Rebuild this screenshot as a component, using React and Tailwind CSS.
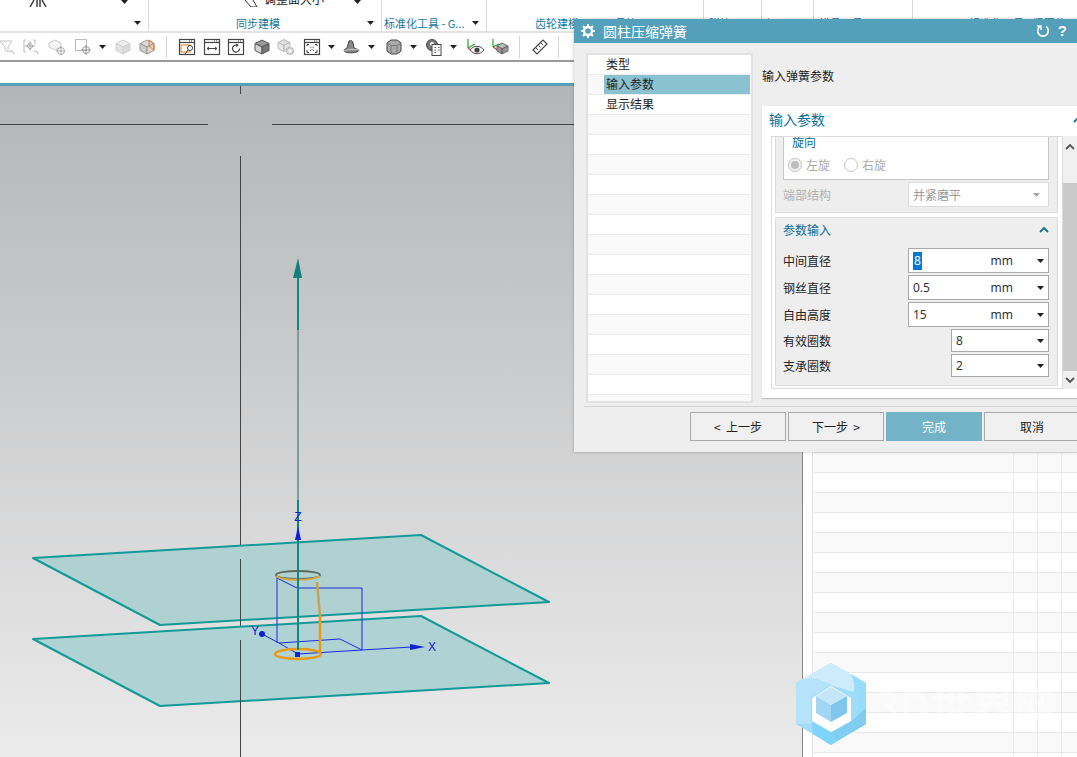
const FONT = "font-['Noto_Sans_CJK_SC','Noto_Sans',sans-serif]";

function Caret({ className = '', color = '#222' }) {
  return (
    <svg width="7" height="4" viewBox="0 0 7 4" className={`shrink-0 ${className}`}>
      <path d="M0 0H7L3.5 4Z" fill={color} />
    </svg>
  );
}

function Chevron({ className = '', color = '#0b6f93' }) {
  return (
    <svg width="10" height="7" viewBox="0 0 10 7" className={`shrink-0 ${className}`}>
      <path d="M1 6L5 2L9 6" fill="none" stroke={color} strokeWidth="1.8" />
    </svg>
  );
}

function Tool({ className = '', children }) {
  return (
    <svg width="18" height="18" viewBox="0 0 18 18" fill="none" className={`shrink-0 ${className}`}>
      {children}
    </svg>
  );
}

function WindowIcon({ className = '', children }) {
  return (
    <Tool className={className}>
      <rect x="1.5" y="1.5" width="15" height="15" stroke="#444" strokeWidth="1.2" fill="#fff" />
      <path d="M2 4.5H16" stroke="#444" strokeWidth="1.2" />
      <path d="M11 3H15" stroke="#444" strokeDasharray="1 1" />
      {children}
    </Tool>
  );
}

function CubeIcon({ className = '', top = '#bbb', left = '#888', right = '#666', stroke = '#444' }) {
  return (
    <Tool className={className}>
      <path d="M9 2L16 5.5L9 9L2 5.5Z" fill={top} stroke={stroke} />
      <path d="M2 5.5V12.5L9 16V9Z" fill={left} stroke={stroke} />
      <path d="M16 5.5V12.5L9 16V9Z" fill={right} stroke={stroke} />
    </Tool>
  );
}

function Sep({ className = '' }) {
  return <div className={`w-px h-[22px] bg-[#d4d4d4] shrink-0 ${className}`} />;
}

function Toolbar() {
  return (
    <div className="h-[29px] flex items-center overflow-hidden bg-white border-b-2 border-[#9a9a9a] shrink-0">
      <Tool className="-ml-[2px]">
        <path d="M2 3H14L10 9V14L7 12V9Z" stroke="#c4c4c4" />
        <path d="M11 14C13 12 16 13 16 16" stroke="#aaa" />
      </Tool>
      <Tool className="ml-[6px]">
        <path d="M4 2H2V14H4M11 2H13V6" stroke="#bbb" />
        <circle cx="8" cy="8" r="2.5" stroke="#aaa" />
        <path d="M8 3V13M3 8H13M12 14C13 12 16 13 16 16" stroke="#aaa" />
      </Tool>
      <Tool className="ml-[8px]">
        <path d="M7 2L13 5V9L7 12L1 9V5Z" stroke="#c8c8c8" fill="#f5f5f5" />
        <circle cx="13" cy="13" r="3.5" stroke="#aaa" />
        <path d="M13 8V17M8 13H17" stroke="#aaa" />
      </Tool>
      <Tool className="ml-[8px]">
        <rect x="1.5" y="1.5" width="11" height="11" stroke="#bbb" />
        <circle cx="12" cy="12" r="3.5" stroke="#999" />
        <path d="M12 7V17M7 12H17" stroke="#999" />
      </Tool>
      <Caret className="ml-[7px] mr-[1px]" />
      <CubeIcon className="ml-[7px]" top="#eee" left="#e3e3e3" right="#dcdcdc" stroke="#d0d0d0" />
      <Tool className="ml-[6px]">
        <path d="M9 2L16 5.5L9 9L2 5.5Z" fill="#ddd" stroke="#999" />
        <path d="M2 5.5V12.5L9 16V9Z" fill="#ccc" stroke="#999" />
        <path d="M16 5.5V12.5L9 16V9Z" fill="#e4d3c6" stroke="#999" />
        <path d="M11 2L16 5.5V12L11 8Z" stroke="#e87a1e" />
      </Tool>
      <Sep className="ml-[10px]" />
      <WindowIcon className="ml-[11px]">
        <rect x="3" y="7" width="9" height="7" stroke="#e87a1e" />
        <circle cx="12" cy="10" r="2.5" stroke="#444" fill="#fff" />
        <path d="M10 12L7 16" stroke="#444" />
      </WindowIcon>
      <WindowIcon className="ml-[7px]">
        <path d="M4 10.5H14M4 10.5L6 9M4 10.5L6 12M14 10.5L12 9M14 10.5L12 12" stroke="#444" />
      </WindowIcon>
      <WindowIcon className="ml-[6px]">
        <path d="M12.5 10.5A3.5 3.5 0 1 1 10 7.2" stroke="#444" strokeWidth="1.2" />
        <path d="M9 5.5L12 7L9.5 9Z" fill="#444" />
      </WindowIcon>
      <CubeIcon className="ml-[8px]" top="#9a9a9a" left="#d4d4d4" right="#777" stroke="#555" />
      <Tool className="ml-[6px]">
        <path d="M7 1.5L13 4.5L7 7.5L1 4.5Z" fill="#ddd" stroke="#bbb" />
        <path d="M1 4.5V10.5L7 13.5V7.5ZM13 4.5V8L7 13.5V7.5Z" fill="#e8e8e8" stroke="#bbb" />
        <circle cx="13" cy="13" r="3.5" fill="#ddd" stroke="#aaa" strokeWidth="1.4" strokeDasharray="1.5 .8" />
        <circle cx="13" cy="13" r="1.2" fill="#fff" />
      </Tool>
      <WindowIcon className="ml-[8px]">
        <path d="M4 8V6.5H6M14 8V6.5H12M4 12V14.5H6M14 12V14.5H12" stroke="#444" />
        <path d="M7 8.5L8.5 10M11 8.5L9.5 10M7 13L8.5 11.5M11 13L9.5 11.5" stroke="#777" />
      </WindowIcon>
      <Caret className="ml-[7px] mr-[1px]" />
      <Tool className="ml-[7px]">
        <path d="M6 3C8 2 10 3 10 5L11 10L16 12C16 15 3 16 1 13C1 11 4 10 4 10Z" fill="#888" stroke="#444" />
        <path d="M1 13C5 11 12 11 16 12" stroke="#ccc" />
      </Tool>
      <Caret className="ml-[7px] mr-[1px]" />
      <Tool className="ml-[9px]">
        <path d="M2 5L6 2H12L16 5V13L12 16H6L2 13Z" fill="#aaa" stroke="#444" />
        <path d="M2 5L6 7.5H12L16 5M6 7.5V16M12 7.5V16" stroke="#777" />
      </Tool>
      <Caret className="ml-[7px] mr-[1px]" />
      <Tool className="ml-[7px]">
        <circle cx="7" cy="7" r="5.5" fill="#777" stroke="#444" />
        <circle cx="7" cy="6" r="2" fill="#fff" />
        <rect x="7" y="6.5" width="9" height="11" fill="#fff" stroke="#444" />
        <path d="M9.5 9.5H11M13 9.5H14.5M9.5 12H11M13 12H14.5M9.5 14.5H11" stroke="#555" />
      </Tool>
      <Caret className="ml-[7px] mr-[1px]" />
      <Tool className="ml-[8px]">
        <path d="M2 1V10" stroke="#2aa02a" strokeWidth="1.2" />
        <path d="M2 10L9 6" stroke="#2aa02a" strokeWidth="1.2" />
        <path d="M2 10L7 14" stroke="#e03030" strokeWidth="1.2" />
        <path d="M4 12C8 7 14 7 18 12C14 17 8 17 4 12Z" fill="#fff" stroke="#444" />
        <circle cx="11" cy="12" r="2.6" fill="#444" />
      </Tool>
      <Tool className="ml-[7px]">
        <path d="M2 1V9M2 9L8 6" stroke="#2aa02a" strokeWidth="1.2" />
        <path d="M2 9L8 13" stroke="#e03030" strokeWidth="1.2" />
        <path d="M11 5L17 8L11 11L6 8Z" fill="#bbb" stroke="#666" />
        <path d="M6 8V13L11 16V11ZM17 8V13L11 16V11Z" fill="#999" stroke="#666" />
      </Tool>
      <Sep className="ml-[10px]" />
      <Tool className="ml-[11px]">
        <path d="M2 12L12 2L16 6L6 16Z" stroke="#444" strokeWidth="1.2" fill="#fff" />
        <path d="M5 10L7 12M7.5 7.5L9.5 9.5M10 5L12 7" stroke="#444" />
      </Tool>
      <Sep className="ml-[9px]" />
    </div>
  );
}

function RibbonGroup({ label, className = '', labelClass = '', caret = false, topCaret = false, children }) {
  return (
    <div className={`relative h-full border-r border-[#d8d8d8] shrink-0 overflow-hidden ${className}`}>
      {children}
      {topCaret && <Caret className="absolute right-[20px] top-[0px]" />}
      <div className={`absolute top-[15px] text-[11px] leading-[16px] text-[#1378a0] whitespace-nowrap ${labelClass}`}>{label}</div>
      {caret && <Caret className="absolute right-[7px] top-[21px]" />}
    </div>
  );
}

function Ribbon() {
  return (
    <div className="h-[33px] flex border-b-2 border-[#e3e3e3] bg-white shrink-0">
      <RibbonGroup className="w-[149px]" caret topCaret>
        <svg width="18" height="7" viewBox="0 0 18 7" className="absolute left-[29px] top-0" fill="none">
          <path d="M1 7L5 0M8 0V7M11 0V7M17 7L13 0" stroke="#333" strokeWidth="1.4" />
        </svg>
      </RibbonGroup>
      <RibbonGroup className="w-[233px]" label="同步建模" labelClass="left-[87px]" caret topCaret>
        <svg width="16" height="7" viewBox="0 0 16 7" className="absolute left-[94px] top-0" fill="none">
          <path d="M2 0L8 7H14L10 0" stroke="#333" />
        </svg>
        <div className="absolute left-[115px] -top-[9px] text-[12px] leading-[16px] text-[#222] whitespace-nowrap">调整面大小</div>
      </RibbonGroup>
      <RibbonGroup className="w-[105px]" label="标准化工具 - G..." labelClass="left-[2px]" caret />
      <RibbonGroup className="w-[217px]" label="齿轮建模" labelClass="left-[48px]">
        <div className="absolute left-[117px] top-[15px] text-[11px] leading-[16px] text-[#1378a0]">工具箱</div>
      </RibbonGroup>
      <RibbonGroup className="w-[58px]" label="弹簧" labelClass="left-[5px]" />
      <RibbonGroup className="w-[52px]" label="加工" labelClass="left-[4px]" />
      <RibbonGroup className="w-[99px]" label="模具工具" labelClass="left-[5px]" />
      <div className="relative flex-1 overflow-hidden">
        <div className="absolute left-[56px] top-[15px] text-[11px] leading-[16px] text-[#1378a0] whitespace-nowrap">标准化工具 - 紧固件</div>
      </div>
    </div>
  );
}

function Viewport() {
  return (
    <div className="w-[803px] h-full bg-gradient-to-b from-[#b4b5b6] to-[#ebebec] border-r border-[#888] shrink-0">
      <svg viewBox="0 86 802 671" width="802" height="671" className="block overflow-visible" fill="none">
        {/* crosshair */}
        <path d="M240.5 86V94M240.5 156V757M0 124.5H208M272 124.5H574" stroke="#444" />
        {/* datum planes */}
        <path d="M33 558L421 535L549 602L160 625Z" fill="#afd1d2" stroke="#119a98" strokeWidth="2" strokeLinejoin="round" />
        <path d="M33 639L421 616L549 683L160 706Z" fill="#afd3d4" stroke="#119a98" strokeWidth="2" strokeLinejoin="round" />
        <path d="M240.5 559V625M240.5 640V706" stroke="#3d4a4a" />
        {/* sketch box */}
        <g stroke="#1a2ce0" strokeWidth="1">
          <path d="M277 577V643M277 578L297 588H362V650M279 643L340 639L362 650L298 654L279 643" />
          <path d="M279 643L262 634M362 650L412 647" />
        </g>
        {/* spring */}
        <path d="M317 582L320 616" stroke="#c9a24a" strokeWidth="2.4" />
        <path d="M320 616V652" stroke="#f09a10" strokeWidth="2.6" />
        <ellipse cx="298" cy="575" rx="22" ry="4" stroke="#5a6a5e" strokeWidth="1.8" />
        <path d="M276 576C282 581 312 581 320 576" stroke="#d6a83e" strokeWidth="2" />
        <ellipse cx="298" cy="654" rx="23" ry="5" stroke="#e89a14" strokeWidth="2.4" />
        {/* axis */}
        <path d="M298 270V330" stroke="#13877f" strokeWidth="2" />
        <path d="M298 330V500" stroke="#7f9d9c" strokeWidth="2" />
        <path d="M298 500V650" stroke="#13877f" strokeWidth="2" />
        <path d="M298 258L293 278H302Z" fill="#13807c" />
        <path d="M298 526L295 540H301Z" fill="#1020d8" />
        <path d="M410 644L425 647L410 650Z" fill="#1020d8" />
        <circle cx="262" cy="634" r="3" fill="#1020d8" />
        <path d="M295 652H300V657H295Z" fill="#1020d8" />
        <text x="298" y="521" textAnchor="middle" fontSize="12" fill="#1020d8" fontFamily="Liberation Sans">Z</text>
        <text x="255" y="635" textAnchor="middle" fontSize="12" fill="#1020d8" fontFamily="Liberation Sans">Y</text>
        <text x="432" y="651" textAnchor="middle" fontSize="12" fill="#1020d8" fontFamily="Liberation Sans">X</text>
      </svg>
    </div>
  );
}

function SidePanel() {
  const rows = Array.from({ length: 34 }, (_, i) => i);
  return (
    <div className="flex-1 h-full bg-white pl-[9px] pt-[7px] overflow-hidden">
      <div className="border-l border-[#e2e2e2] pl-px">
        {rows.map((i) => (
          <div key={i} className={`h-[20px] flex border-b border-[#e8e8e8] ${i % 2 === 0 ? 'bg-[#f9f9f9]' : 'bg-white'}`}>
            <div className="w-[200px] border-r border-[#ececec]" />
            <div className="w-[24px] border-r border-[#ececec]" />
            <div className="w-[24px] border-r border-[#ececec]" />
          </div>
        ))}
      </div>
    </div>
  );
}

function StepList() {
  const rows = ['类型', '输入参数', '显示结果', '', '', '', '', '', '', '', '', '', '', '', '', '', '', ''];
  return (
    <div className="w-[167px] h-[350px] bg-white border-2 border-[#e2e2e2] overflow-hidden shrink-0">
      {rows.map((r, i) => (
        <div key={i} className={`h-[20px] border-b border-[#ececec] mr-[1px] pl-[16px] ${i % 2 === 1 ? 'bg-[#f9f9f9]' : 'bg-white'}`}>
          <div className={`h-[19px] pl-[2px] text-[12px] leading-[18px] text-[#222] ${i === 1 ? 'bg-[#8bc2d2]' : ''}`}>{r}</div>
        </div>
      ))}
    </div>
  );
}

function ParamRow({ label, value, unit, narrow }) {
  return (
    <div className={`flex items-center justify-between ${narrow ? 'h-[25px]' : 'h-[27px]'}`}>
      <span className="text-[12px] text-[#222]">{label}</span>
      <div className={`${narrow ? 'w-[98px] h-[23px]' : 'w-[141px] h-[25px]'} bg-white border border-[#a9a9a9] flex items-center pl-[4px] pr-[4px]`}>
        {value === 'sel' ? (
          <span className="bg-[#0078d7] text-white text-[12px] leading-[18px] px-px font-['Noto_Sans']">8</span>
        ) : (
          <span className="text-[12px] text-[#333] font-['Noto_Sans']">{value}</span>
        )}
        {unit && <span className="ml-auto mr-[24px] text-[12px] text-[#333] font-['Noto_Sans']">{unit}</span>}
        <Caret className={unit ? '' : 'ml-auto'} />
      </div>
    </div>
  );
}

function Dialog() {
  return (
    <div className="absolute left-[574px] top-[19px] w-[503px] h-[433px] bg-[#eeeeee] flex flex-col shadow-[0_0_3px_rgba(0,0,0,0.25)] overflow-hidden">
      <div className="h-[24px] bg-[#549fba] flex items-center pl-[7px] pr-[10px] shrink-0">
        <svg width="14" height="14" viewBox="0 0 14 14" fill="none">
          <circle cx="7" cy="7" r="4" stroke="#fff" strokeWidth="2.4" />
          <path d="M7 0V2.5M7 11.5V14M0 7H2.5M11.5 7H14M2 2L3.8 3.8M10.2 10.2L12 12M12 2L10.2 3.8M3.8 10.2L2 12" stroke="#fff" strokeWidth="2" />
        </svg>
        <span className="ml-[8px] text-[14px] text-white">圆柱压缩弹簧</span>
        <svg width="14" height="14" viewBox="0 0 14 14" fill="none" className="ml-auto">
          <path d="M4 2.5A5.3 5.3 0 1 0 10 2.5" stroke="#fff" strokeWidth="1.6" />
          <path d="M1 2H5V6" stroke="#fff" strokeWidth="1.4" />
        </svg>
        <span className="ml-[8px] text-[15px] font-bold text-white font-['Liberation_Sans']">?</span>
      </div>

      <div className="flex pl-[12px] pt-[10px] h-[351px] shrink-0">
        <StepList />
        <div className="ml-[9px] flex-1 min-w-0">
          <div className="h-[53px] pt-[13px] text-[12px] leading-[20px] text-[#222]">输入弹簧参数</div>
          <div className="bg-white h-[292px] shadow-[0_1px_1px_rgba(0,0,0,0.2)] -mr-px">
            <div className="h-[30px] flex items-center pl-[7px] pb-[4px]">
              <span className="text-[14px] text-[#0b6f93]">输入参数</span>
              <Chevron className="ml-auto -mr-[5px]" />
            </div>
            <div className="flex h-[253px] ml-[9px]">
              <div className="w-[292px] border border-[#dcdcdc] pl-[3px] pr-[4px] pb-[2px] flex flex-col overflow-hidden">
                <div className="bg-[#eeeeee] border-x border-b border-[#dcdcdc] h-[76px] pl-[7px] pr-[8px] shrink-0">
                  <div className="h-[44px] bg-white border-x border-b border-[#c8c8c8] -mt-px">
                    <div className="pl-[8px] text-[12px] leading-[12px] text-[#0b6f93] h-[17px]">旋向</div>
                    <div className="flex items-center pl-[4px] h-[24px] text-[12px] text-[#aaa]">
                      <span className="w-[14px] h-[14px] rounded-full border border-[#c4c4c4] bg-[#f2f2f2] flex items-center justify-center">
                        <span className="w-[8px] h-[8px] rounded-full bg-[#bdbdbd]" />
                      </span>
                      <span className="ml-[4px]">左旋</span>
                      <span className="ml-[14px] w-[14px] h-[14px] rounded-full border border-[#c4c4c4] bg-white" />
                      <span className="ml-[4px]">右旋</span>
                    </div>
                  </div>
                  <div className="flex items-center justify-between mt-[2px]">
                    <span className="text-[12px] text-[#b0b0b0]">端部结构</span>
                    <div className="w-[141px] h-[25px] bg-white border border-[#dcdcdc] flex items-center pl-[4px] pr-[8px] text-[12px] text-[#9a9a9a]">
                      并紧磨平
                      <Caret className="ml-auto" color="#a8a8a8" />
                    </div>
                  </div>
                </div>
                <div className="mt-[4px] bg-[#eeeeee] border border-[#dcdcdc] flex-1 pl-[7px] pr-[8px]">
                  <div className="h-[23px] flex items-center justify-between mb-[6px]">
                    <span className="text-[12px] text-[#0b6f93]">参数输入</span>
                    <Chevron />
                  </div>
                  <ParamRow label="中间直径" value="sel" unit="mm" />
                  <ParamRow label="钢丝直径" value="0.5" unit="mm" />
                  <ParamRow label="自由高度" value="15" unit="mm" />
                  <ParamRow label="有效圈数" value="8" narrow />
                  <ParamRow label="支承圈数" value="2" narrow />
                </div>
              </div>
              <div className="w-[14px] bg-[#f0f0f0] flex flex-col">
                <div className="h-[20px] flex items-center justify-center">
                  <Chevron color="#555" />
                </div>
                <div className="h-[27px]" />
                <div className="h-[188px] bg-[#c9c9c9]" />
                <div className="flex-1 flex items-center justify-center">
                  <Chevron color="#555" className="rotate-180" />
                </div>
              </div>
            </div>
          </div>
        </div>
      </div>

      <div className="mt-[12px] ml-[10px] border-t border-[#d4d4d4] pt-[5px] pl-[106px] flex gap-[2px] -mr-[4px]">
        <button className="w-[96px] h-[29px] border border-[#a9a9a9] bg-[#f0f0f0] text-[12px] text-[#222] whitespace-pre">&lt;  上一步</button>
        <button className="w-[96px] h-[29px] border border-[#a9a9a9] bg-[#f0f0f0] text-[12px] text-[#222] whitespace-pre">下一步  &gt;</button>
        <button className="w-[96px] h-[29px] bg-[#72b3c8] text-[12px] text-white">完成</button>
        <button className="w-[96px] h-[29px] border border-[#a9a9a9] bg-[#f0f0f0] text-[12px] text-[#222]">取消</button>
      </div>
    </div>
  );
}

function Watermark() {
  return (
    <div className="absolute left-[795px] top-[662px] flex items-center pointer-events-none">
      <svg width="72" height="84" viewBox="0 0 72 84" fill="none">
        <path d="M36 1L71 21V62L36 83L1 62V21Z" fill="#9fdcfa" />
        <path d="M1 21L36 1L56 12C60 20 60 26 58 30L36 23C20 14 8 16 1 21Z" fill="#cdecfb" />
        <path d="M1 21C8 16 20 14 36 23L16 35V62C8 62 4 62 1 62Z" fill="#b5e3fa" />
        <path d="M56 12L71 21V62L58 70C66 56 66 30 56 12Z" fill="#97dbfa" />
        <path d="M36 71L58 58L71 46V62L42 79C40 76 38 73 36 71Z" fill="#7fcdf0" />
        <path d="M17 56L36 69C38 73 40 76 42 79L36 83L18 72Z" fill="#7fd4fb" />
        <path d="M36 24L56 36V59L36 70L17 59V36Z" fill="#ffffff" />
        <path d="M36 25L52 34L36 43L21 34Z" fill="#c5e6f7" />
        <path d="M21 34L36 43V60L21 51Z" fill="#a2d6f4" />
        <path d="M52 34L36 43V60L52 51Z" fill="#7fc7ec" />
      </svg>
      <span className="ml-[8px] text-[42px] leading-none font-bold text-white opacity-40 whitespace-nowrap">3D世界网</span>
    </div>
  );
}

export default function App() {
  return (
    <div className={`relative w-[1077px] h-[757px] overflow-hidden bg-white flex flex-col ${FONT}`}>
      <Ribbon />
      <Toolbar />
      <div className="h-[21px] bg-white shrink-0" />
      <div className="h-[3px] bg-[#54a0b8] shrink-0" />
      <div className="flex-1 flex min-h-0">
        <Viewport />
        <SidePanel />
      </div>
      <Dialog />
      <Watermark />
    </div>
  );
}
